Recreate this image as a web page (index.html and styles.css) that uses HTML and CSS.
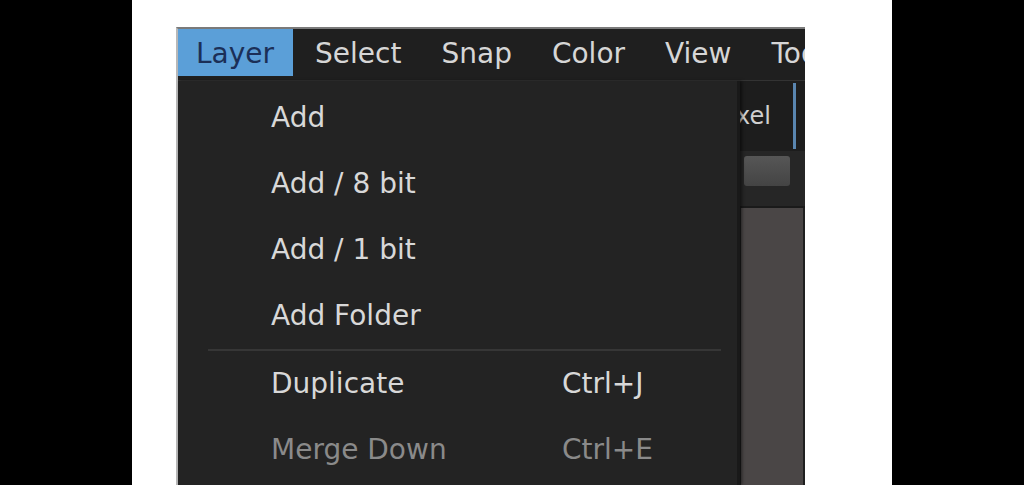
FILE: index.html
```html
<!doctype html>
<html>
<head>
<title>Layer menu</title>
<meta name=viewport content="width=device-width, initial-scale=1">
<link rel="stylesheet" href="styles.css">
</head>
<body>
<div class=page>
  <div class=app>
    <div class=menubar>
      <span class="mitem active">Layer</span>
      <span class=mitem>Select</span>
      <span class=mitem>Snap</span>
      <span class=mitem>Color</span>
      <span class=mitem>View</span>
      <span class=mitem>Tool</span>
    </div>
    <div class=work>
      <div class=toolrow>
        <span class=pixel>Pixel</span>
        <span class=bluebar></span>
      </div>
      <div class=btnrow>
        <span class=btn></span>
      </div>
      <div class=panel></div>

      <div class=dropdown>
        <div class=row><span class=label>Add</span></div>
        <div class=row><span class=label>Add / 8 bit</span></div>
        <div class=row><span class=label>Add / 1 bit</span></div>
        <div class=row><span class=label>Add Folder</span></div>
        <div class=sep></div>
        <div class=row><span class=label>Duplicate</span><span class=key>Ctrl+J</span></div>
        <div class="row off"><span class=label>Merge Down</span><span class=key>Ctrl+E</span></div>
      </div>
    </div>
  </div>
</div>
</body>
</html>
```

FILE: styles.css
```css
body {
    margin: 0;
    background-color: #000;
    font-family: "DejaVu Sans", "Noto Sans", sans-serif;
}
.page {
    width: 760px;
    height: 485px;
    margin: 0 auto;
    background-color: #fff;
    padding: 27px 0 0 44px;
    box-sizing: border-box;
    overflow: hidden;
}
.app {
    width: 629px;
    height: 458px;
    background-color: #1f1f1f;
    border-top: 2px solid #7a7a7a;
    border-left: 2px solid #b8b8b8;
    box-sizing: border-box;
    display: flex;
    flex-direction: column;
}

/* menu bar */
.menubar {
    height: 51px;
    display: flex;
    align-items: stretch;
    white-space: nowrap;
    overflow: hidden;
    border-bottom: 1px solid #333;
}
.mitem {
    padding: 2px 18px 0 22px;
    font-size: 28px;
    color: #d6d6d6;
    display: flex;
    align-items: center;
    margin-bottom: 4px;
}
.mitem.active {
    background-color: #5b9fd8;
    color: #1b2f57;
    padding-left: 18px;
    padding-right: 19px;
}

/* stuff behind the dropdown */
.work {
    flex: 1;
    position: relative;
    display: flex;
    flex-direction: column;
    align-items: flex-end;
}
.toolrow {
    width: 66px;
    height: 70px;
    background-color: #1d1d1d;
    display: flex;
    align-items: center;
    justify-content: flex-end;
    gap: 22px;
    padding-right: 9px;
    box-sizing: border-box;
    white-space: nowrap;
}
.pixel {
    font-size: 24px;
    color: #d0d0d0;
}
.bluebar {
    flex: none;
    width: 3px;
    height: 66px;
    background-color: #5a86b0;
}
.btnrow {
    width: 66px;
    height: 57px;
    background-color: #262626;
    border-bottom: 2px solid #1a1a1a;
    padding: 5px 0 0 5px;
    box-sizing: border-box;
}
.btn {
    display: block;
    width: 46px;
    height: 30px;
    border-radius: 3px;
    background: linear-gradient(#565656, #444);
}
.panel {
    width: 62px;
    flex: 1;
    margin-right: 2px;
    background-color: #4a4646;
}

/* the Layer dropdown */
.dropdown {
    position: absolute;
    left: 0;
    top: 0;
    width: 562px;
    bottom: 0;
    background-color: #232323;
    border-right: 3px solid #191919;
    box-shadow: 2px 0 3px rgba(0,0,0,0.5);
    padding-top: 4px;
    box-sizing: border-box;
}
.row {
    height: 66px;
    display: flex;
    align-items: center;
    padding-left: 93px;
    padding-bottom: 2px;
    box-sizing: border-box;
    font-size: 28px;
    color: #d8d8d8;
}
.row .label {
    width: 291px;
}
.row.off {
    color: #8a8a8a;
}
.sep {
    height: 2px;
    margin: 0 16px 0 30px;
    background-color: #363636;
}
```
